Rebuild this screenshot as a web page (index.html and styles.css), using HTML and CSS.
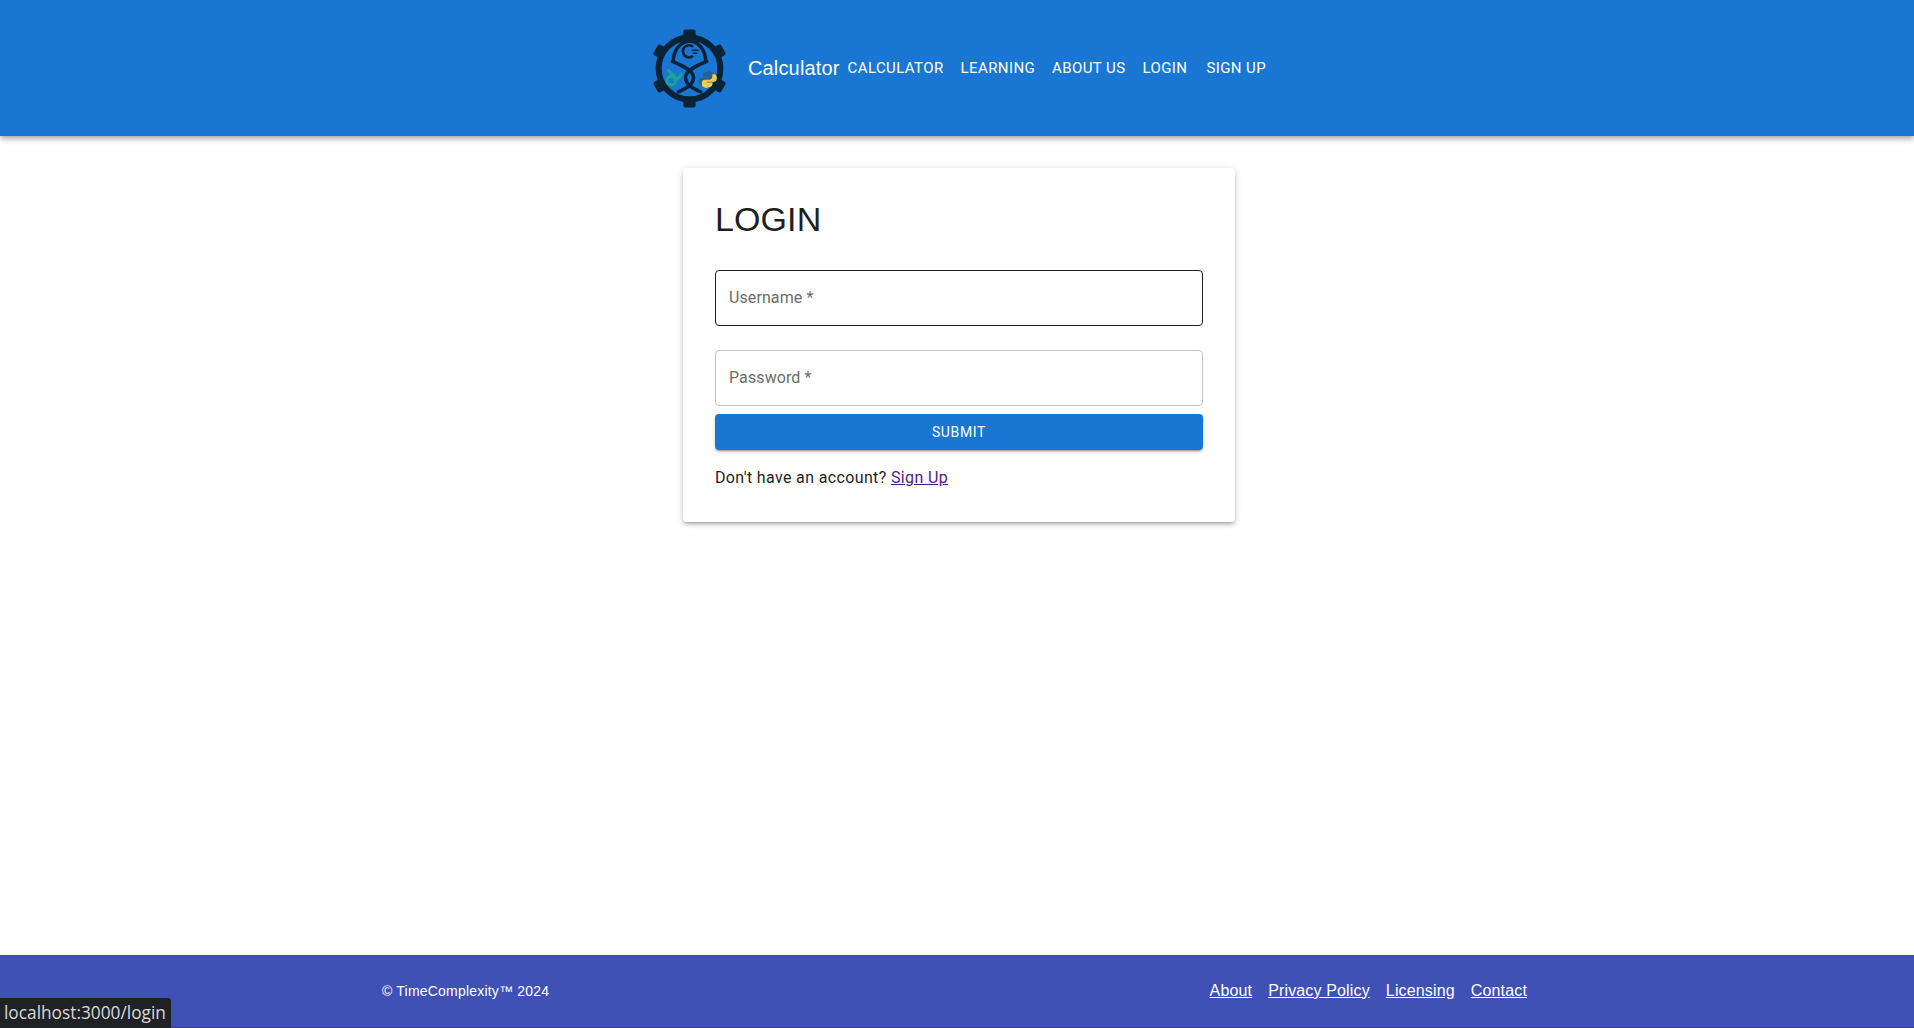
FILE: index.html
```html
<!DOCTYPE html>
<html lang="en">
<head>
  <meta charset="UTF-8" />
  <title>Login</title>
  <link rel="stylesheet" href="styles.css">
</head>
<body>
  <header class="topbar">
    <svg class="logo" viewBox="0 0 80 80" aria-label="TimeComplexity logo">
      <g fill="#0b2336">
        <rect x="34" y="1.5" width="12" height="11" rx="2"/>
        <rect x="34" y="1.5" width="12" height="11" rx="2" transform="rotate(60 40 40)"/>
        <rect x="34" y="1.5" width="12" height="11" rx="2" transform="rotate(120 40 40)"/>
        <rect x="34" y="1.5" width="12" height="11" rx="2" transform="rotate(180 40 40)"/>
        <rect x="34" y="1.5" width="12" height="11" rx="2" transform="rotate(240 40 40)"/>
        <rect x="34" y="1.5" width="12" height="11" rx="2" transform="rotate(300 40 40)"/>
      </g>
      <circle cx="40" cy="40" r="30.5" fill="#1976d2" stroke="#0b2336" stroke-width="6"/>
      <g fill="none" stroke="#0b2336" stroke-width="3.4" stroke-linecap="round">
        <path d="M23 33C30 36 44 41 44 49C44 55 37 60 29 63"/>
        <path d="M57 33C50 36 36 41 36 49C36 55 43 60 51 63"/>
        <path d="M24 33C24 22 31 13 40 13C49 13 56 22 56 33"/>
      </g>
      <path d="M43.5 18.5A6 6 0 1 0 43.5 27.5" fill="none" stroke="#0b2336" stroke-width="2.6"/>
      <path d="M42 22h7M43.5 25h4" stroke="#0b2336" stroke-width="1.4"/>
      <g fill="none" stroke="#1ba396" stroke-width="3.2" stroke-linecap="round">
        <circle cx="22" cy="52" r="4.2"/>
        <path d="M19.5 42L26.5 49.5M32 46L26 52"/>
      </g>
      <g transform="translate(58 51) scale(.82) translate(-57 -52.5)">
        <path d="M57.5 43c-3.5 0-6 1-6 3.5v2.5h6.5v1h-8.500c-2.500 0-3.500 2-3.500 4.500s1 4.500 3 4.500h2.500v-3c0-2 1.500-3.500 3.500-3.500h5.500c2 0 3.500-1.500 3.500-3v-3.500c0-2-2.500-3.500-6.500-3.500z" fill="#2a5f92"/>
        <path d="M57.5 43c-3.5 0-6 1-6 3.5v2.5h6.5v1h-8.500c-2.500 0-3.500 2-3.500 4.500s1 4.500 3 4.500h2.500v-3c0-2 1.500-3.500 3.500-3.500h5.500c2 0 3.500-1.500 3.500-3v-3.500c0-2-2.500-3.500-6.500-3.500z" fill="#f2c94c" transform="rotate(180 57 52.5)"/>
      </g>
    </svg>
    <span class="brand">Calculator</span>
    <nav class="nav">
      <a href="#">Calculator</a>
      <a href="#">Learning</a>
      <a href="#">About Us</a>
      <a href="#">Login</a>
      <a href="#">Sign Up</a>
    </nav>
  </header>

  <main class="content">
    <form class="card">
      <h1>LOGIN</h1>
      <div class="field field-hover"><span>Username *</span></div>
      <div class="field"><span>Password *</span></div>
      <button type="button">Submit</button>
      <p>Don't have an account? <a href="#">Sign Up</a></p>
    </form>
  </main>

  <footer class="footer">
    <span class="copyright">© TimeComplexity™ 2024</span>
    <div class="footer-links">
      <a href="#">About</a>
      <a href="#">Privacy Policy</a>
      <a href="#">Licensing</a>
      <a href="#">Contact</a>
    </div>
  </footer>

  <div class="status">localhost:3000/login</div>
</body>
</html>
```

FILE: styles.css
```css
body {
  margin: 0;
  height: 1028px;
  display: flex;
  flex-direction: column;
  background-color: #fff;
  font-family: Roboto, sans-serif;
  color: #1f1f1f;
  overflow: hidden;
}
.topbar {
  display: flex;
  align-items: center;
  height: 136px;
  padding-left: 649px;
  background-color: #1976d2;
  color: #fff;
  box-shadow: 0 2px 4px -1px rgba(0,0,0,0.2), 0 4px 5px rgba(0,0,0,0.14), 0 1px 10px rgba(0,0,0,0.12);
}
.logo {
  width: 81px;
  height: 81px;
  margin-right: 18px;
}
.brand {
  font-family: 'Liberation Sans', sans-serif;
  font-size: 20px;
  letter-spacing: 0.15px;
  margin-right: 8px;
}
.nav {
  display: flex;
  gap: 17px;
}
.nav a {
  color: #fff;
  text-decoration: none;
  text-transform: uppercase;
  font-size: 15px;
  letter-spacing: 0.4px;
}
.nav a:last-child {
  margin-left: 2px;
}
.content {
  flex: 1;
  padding-left: 4px;
}
.card {
  width: 488px;
  margin: 32px auto 0;
  padding: 32px;
  height: 290px;
  background: #fff;
  border-radius: 4px;
  box-shadow: 0 3px 3px -2px rgba(0,0,0,0.2), 0 3px 4px rgba(0,0,0,0.14), 0 1px 8px rgba(0,0,0,0.12);
}
.card h1 {
  margin: 0 0 31px;
  font-family: 'Liberation Sans', sans-serif;
  font-size: 34px;
  font-weight: 400;
  line-height: 39px;
  letter-spacing: 0.1px;
}
.field {
  display: flex;
  align-items: center;
  box-sizing: border-box;
  height: 56px;
  margin-bottom: 24px;
  padding: 0 13px 1px;
  border: 1px solid #c4c4c4;
  border-radius: 4px;
  color: #6b6b6b;
  font-size: 16px;
  letter-spacing: 0.1px;
}
.field + .field {
  margin-bottom: 8px;
}
.field-hover {
  border-color: #1f1f1f;
}
.card button {
  display: block;
  width: 100%;
  height: 36px;
  border: none;
  border-radius: 4px;
  background-color: #1976d2;
  color: #fff;
  font-family: Roboto, sans-serif;
  font-size: 14px;
  letter-spacing: 0.65px;
  text-transform: uppercase;
  box-shadow: 0 3px 1px -2px rgba(0,0,0,0.2), 0 2px 2px rgba(0,0,0,0.14), 0 1px 5px rgba(0,0,0,0.12);
}
.card p {
  margin: 16px 0 0;
  font-size: 16px;
  letter-spacing: 0.36px;
  line-height: 24px;
}
.card p a {
  color: #551a8b;
}
.footer {
  display: flex;
  justify-content: space-between;
  align-items: center;
  height: 71px;
  padding: 0 387px 1px 382px;
  background-color: #3f51b5;
  border-bottom: 1px solid #444;
  color: #fff;
  font-family: 'Liberation Sans', sans-serif;
}
.copyright {
  font-size: 14px;
  letter-spacing: 0.2px;
}
.footer-links {
  display: flex;
  gap: 16px;
  font-size: 16px;
  letter-spacing: 0.15px;
}
.footer-links a {
  color: #fff;
}
.status {
  position: fixed;
  left: 0;
  bottom: 0;
  height: 30px;
  padding: 0 5px 0 4px;
  background-color: #202124;
  border-top-right-radius: 3px;
  color: #d8d8d8;
  font-family: 'Open Sans', sans-serif;
  font-size: 17.3px;
  line-height: 30px;
}
```
